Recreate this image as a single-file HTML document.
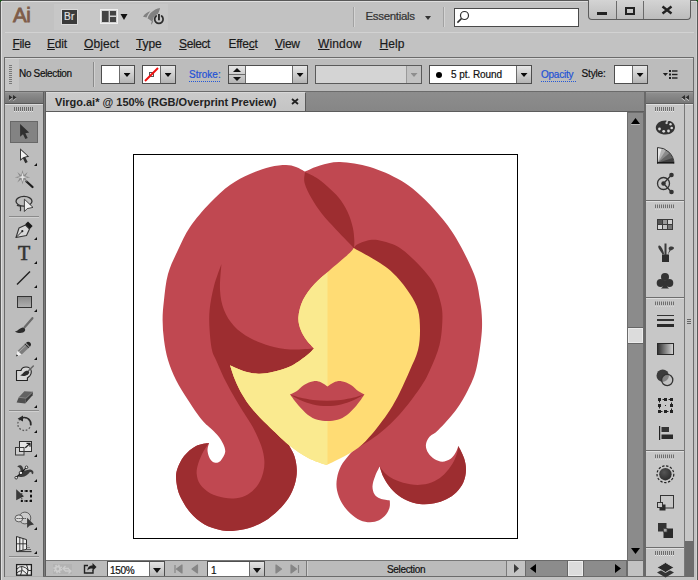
<!DOCTYPE html>
<html><head><meta charset="utf-8"><title>Virgo.ai</title>
<style>
*{box-sizing:border-box;margin:0;padding:0}
html,body{width:698px;height:580px;overflow:hidden;background:#c2c2c2;font-family:"Liberation Sans",sans-serif;color:#111}
#w{position:relative;width:698px;height:580px;overflow:hidden;background:#c2c2c2}
.a{position:absolute}
.t{position:absolute;white-space:nowrap;line-height:1;-webkit-text-stroke:.2px}
.menu{font-size:12px;top:38px;color:#1a1a1a}
.menu u{text-decoration:underline;text-underline-offset:1px}
.combo{position:absolute;border:1px solid #4d4d4d;background:#fff;top:65px;height:19px}
.btn{position:absolute;top:0;bottom:0;right:0;width:15px;border-left:1px solid #6b6b6b;background:linear-gradient(#e6e6e6,#b4b4b4)}
.btn:after{content:"";position:absolute;left:3.500px;top:7px;width:7px;height:4px;background:#0a0a0a;clip-path:polygon(0 0,100% 0,50% 100%)}
.link{color:#1f52d6;-webkit-text-stroke:.2px #1f52d6;font-size:10px;padding-bottom:2px;background:repeating-linear-gradient(90deg,#2257d8 0 1px,transparent 1px 2px) 0 100%/100% 1px no-repeat}
.grip{position:absolute;height:5px;width:20px;background:repeating-linear-gradient(90deg,#6a6a6a 0 1px,transparent 1px 2px) 0 0/20px 4px no-repeat,repeating-linear-gradient(90deg,#e2e2e2 0 1px,transparent 1px 2px) 0 4px/20px 1px no-repeat}
.sep{position:absolute;height:1px;background:#7d7d7d;box-shadow:0 1px 0 #d2d2d2}
.btn.dis:after{background:#8e8e8e}
</style></head><body><div id="w">
<!-- window frame -->
<div class="a" style="left:0;top:0;width:698px;height:584px;background:#c2c2c2;border:1px solid #585858"></div>
<div class="a" style="left:1px;top:1px;width:696px;height:582px;border:1px solid #dedede;border-right-color:#cfcfcf;border-bottom-color:#cfcfcf"></div>
<div class="a" style="left:0;top:0;width:2px;height:1px;background:#1d5a1d"></div><div class="a" style="left:0;top:1px;width:1px;height:1px;background:#1d5a1d"></div>
<div class="a" style="left:696px;top:0;width:2px;height:1px;background:#1d5a1d"></div><div class="a" style="left:697px;top:1px;width:1px;height:1px;background:#1d5a1d"></div>
<div class="a" style="left:4px;top:57px;width:690px;height:520px;background:#bdbdbd;border:1px solid #6b6b6b"></div>
<!-- app bar -->
<div class="a" style="left:54px;top:4px;width:114px;height:26px;background:#c7c7c7"></div>
<div class="t" style="left:13px;top:5px;font-size:20.5px;color:#7f5d49;-webkit-text-stroke:.8px #7f5d49;letter-spacing:-.4px">Ai</div>
<div class="a" style="left:61px;top:9px;width:17px;height:16px;background:#3b3b3b;border:1px solid #dadada"></div>
<div class="t" style="left:64px;top:12px;font-size:10px;color:#e0e0e0;letter-spacing:.3px">Br</div>
<svg class="a" style="left:96px;top:4px" width="76" height="26" viewBox="96 4 76 26"><rect x="100.500" y="9.500" width="17" height="14" fill="#cfcfcf" stroke="#efefef"/><rect x="102" y="11" width="6.600" height="11" fill="#434343"/><rect x="110" y="11" width="6" height="4.500" fill="#434343"/><rect x="110" y="17" width="6" height="5" fill="#434343"/><path d="M120.500 14h7l-3.500 6z" fill="#111"/>
<path d="M147.600 18.500C149 13 154 9 160 7.900C159.500 12.500 155.500 18 151.500 21.500C150.500 20 149 19 147.600 18.500Z" fill="#818181"/><path d="M143 16.700C144.500 14 147.500 12 150.400 11.300C149 13 147.500 15 146.500 17.500Z" fill="#818181"/><path d="M151 24.700C151 22.500 152 21 153.300 19.800C153.300 21.500 153 23 151 24.700Z" fill="#818181"/>
<circle cx="158.900" cy="19.500" r="5.600" fill="#c7c7c7"/><path d="M156.200 16A4.200 4.200 0 1 0 161.600 16" fill="none" stroke="#2e2e2e" stroke-width="1.700" stroke-linecap="round"/><rect x="158" y="14" width="1.900" height="6.300" fill="#2e2e2e"/></svg>
<div class="a" style="left:353px;top:7px;width:1px;height:20px;background:#a2a2a2;box-shadow:1px 0 0 #d4d4d4"></div>
<div class="t" style="left:365.5px;top:11px;font-size:11.5px;letter-spacing:-.32px;color:#333">Essentials</div>
<div class="a" style="left:425px;top:16px;border:3px solid transparent;border-top:4px solid #333;border-bottom:0"></div>
<div class="a" style="left:443px;top:7px;width:1px;height:20px;background:#a2a2a2;box-shadow:1px 0 0 #d4d4d4"></div>
<div class="a" style="left:454px;top:8px;width:125px;height:19px;background:#fff;border:1px solid #4a4a4a"></div>
<svg class="a" style="left:456px;top:9px" width="16" height="16" viewBox="456 9 16 16"><circle cx="464.500" cy="15.500" r="4" fill="none" stroke="#2e2e2e" stroke-width="1.200"/><path d="M461.400 18.600L457.400 22.600" stroke="#2e2e2e" stroke-width="1.500"/></svg>
<!-- window buttons -->
<div class="a" style="left:588px;top:0;width:103px;height:20px;border:1px solid #5c5c5c;border-top:0;border-radius:0 0 4px 4px;background:linear-gradient(#d4d4d4,#bcbcbc)"></div>
<div class="a" style="left:616px;top:1px;width:1px;height:18px;background:#6a6a6a"></div>
<div class="a" style="left:643px;top:1px;width:1px;height:18px;background:#6a6a6a"></div>
<div class="a" style="left:597px;top:12px;width:10px;height:3px;background:#222"></div>
<div class="a" style="left:625px;top:7px;width:10px;height:8px;border:2px solid #222"></div>
<svg class="a" style="left:661px;top:5px" width="12" height="10"><path d="M1.5 1.5L10.5 8.5M10.5 1.5L1.5 8.5" stroke="#222" stroke-width="2.4"/></svg>
<!-- menu -->
<div class="a" style="left:5px;top:32px;width:689px;height:1px;background:#d2d2d2"></div>
<div class="t menu" style="left:12.5px;letter-spacing:-.34px"><u>F</u>ile</div>
<div class="t menu" style="left:47px;letter-spacing:-.22px"><u>E</u>dit</div>
<div class="t menu" style="left:84px;letter-spacing:.08px"><u>O</u>bject</div>
<div class="t menu" style="left:136px;letter-spacing:-.13px"><u>T</u>ype</div>
<div class="t menu" style="left:179px;letter-spacing:-.39px"><u>S</u>elect</div>
<div class="t menu" style="left:228.4px;letter-spacing:-.2px">Effe<u>c</u>t</div>
<div class="t menu" style="left:275px;letter-spacing:-.27px"><u>V</u>iew</div>
<div class="t menu" style="left:318px;letter-spacing:.15px"><u>W</u>indow</div>
<div class="t menu" style="left:379.5px;letter-spacing:.1px"><u>H</u>elp</div>
<!-- control bar -->
<div class="a" style="left:5px;top:57px;width:688px;height:35px;border:1px solid #6b6b6b;border-left:0;border-right:0;background:#bcbcbc;box-shadow:inset 0 1px 0 #d8d8d8"></div>

<div class="a" style="left:5px;top:59px;width:14px;height:32px;background:#c6c6c6"></div>
<div class="a" style="left:9px;top:65px;width:3px;height:20px;background:repeating-linear-gradient(180deg,#787878 0 1px,transparent 1px 2px)"></div>
<div class="t" style="left:19px;top:69px;font-size:10px;letter-spacing:-.33px;color:#111">No Selection</div>
<div class="a" style="left:93px;top:62px;width:1px;height:25px;background:#8a8a8a;box-shadow:1px 0 0 #d0d0d0"></div>
<div class="combo" style="left:101px;width:34px"><div class="btn"></div></div>
<div class="combo" style="left:142px;width:34px"><svg class="a" style="left:0;top:0" width="17" height="17"><rect x="6.5" y="6.5" width="4" height="4" fill="none" stroke="#555"/><path d="M2 15L15 2" stroke="#e11" stroke-width="2"/></svg><div class="btn"></div></div>
<div class="t link" style="left:189px;top:70px">Stroke:</div>
<div class="combo" style="left:228px;width:80px"><div class="a" style="left:0;top:0;width:17px;height:17px;border-right:1px solid #6b6b6b;background:linear-gradient(#e6e6e6,#b4b4b4)"><div class="a" style="left:0;top:8px;width:16px;height:1px;background:#6b6b6b"></div><div class="a" style="left:4px;top:2px;border:4px solid transparent;border-bottom:4px solid #111;border-top:0"></div><div class="a" style="left:4px;top:11px;border:4px solid transparent;border-top:4px solid #111;border-bottom:0"></div></div><div class="btn"></div></div>
<div class="combo" style="left:315px;width:107px;background:#d4d4d4;border-color:#5a5a5a"><div class="btn dis" style="background:#c2c2c2;border-left-color:#9a9a9a"></div></div>
<div class="combo" style="left:429px;width:103px"><div class="a" style="left:6px;top:6px;width:6px;height:6px;border-radius:3px;background:#000"></div><div class="t" style="left:21px;top:4px;font-size:10px;letter-spacing:-.06px">5 pt. Round</div><div class="btn"></div></div>
<div class="t link" style="left:541px;top:70px;font-size:10px;letter-spacing:-.24px;padding-right:3.500px">Opacity</div>
<div class="t" style="left:581.5px;top:69px;font-size:10px;letter-spacing:-.15px">Style:</div>
<div class="combo" style="left:614px;width:34px"><div class="btn"></div></div>
<svg class="a" style="left:662px;top:68px" width="18" height="13" viewBox="662 68 18 13"><path d="M662.800 73h5.200l-2.600 3z" fill="#1e1e1e"/><g fill="#1e1e1e"><rect x="669" y="70" width="2" height="2"/><rect x="669" y="73.500" width="2" height="2"/><rect x="669" y="77" width="2" height="2"/><rect x="672" y="70.300" width="5.500" height="1.400"/><rect x="672" y="73.800" width="5.500" height="1.400"/><rect x="672" y="77.300" width="5.500" height="1.400"/></g></svg>
<!-- toolbar left -->
<div class="a" style="left:5px;top:92px;width:38px;height:484px;background:#bdbdbd"></div>
<div class="a" style="left:5px;top:92px;width:38px;height:11px;background:linear-gradient(#8e8e8e,#767676);border-top:1px solid #999"></div>
<div class="a" style="left:5px;top:104px;width:38px;height:1px;background:#dcdcdc"></div>
<div class="a" style="left:5px;top:103px;width:38px;height:1px;background:#575757"></div>
<div class="a" style="left:43px;top:92px;width:3px;height:484px;background:#7c7c7c;border-left:1px solid #5e5e5e;border-right:1px solid #5e5e5e"></div>
<div class="a" style="left:5px;top:576px;width:38px;height:1px;background:#adadad"></div>
<svg class="a" style="left:9px;top:95px" width="9" height="7"><path d="M0 1l3.500 2.500l-3.500 2.500zM4 1l3.500 2.500l-3.500 2.500z" fill="#bdbdbd"/><path d="M0 0l3.500 2.500l-3.500 2.500zM4 0l3.500 2.500l-3.500 2.500z" fill="#2e2e2e"/></svg>
<div class="grip" style="left:14px;top:107px"></div>
<svg class="a" style="left:0;top:0" width="48" height="580" viewBox="0 0 48 580">
<defs><linearGradient id="gr1" x1="0" y1="0" x2="0" y2="1"><stop offset="0" stop-color="#8a8a8a"/><stop offset="1" stop-color="#b0b0b0"/></linearGradient>
<path id="tri" d="M3 0v3h-3z" fill="#111"/></defs>
<!-- selection -->
<rect x="10.500" y="121.500" width="27" height="21" fill="#838383" stroke="#686868"/>
<path d="M20.100 124V136.700L23 134.200L25.300 139L27.700 137.900L25.400 133.200L29.200 132.500Z" fill="#303030"/>
<!-- direct selection -->
<path d="M20.100 148.200V160.900L23 158.400L25.300 163.200L27.700 162.100L25.400 157.400L29.200 156.700Z" fill="#303030"/>
<path d="M21 150.300V159L23.200 157.200L27.300 156Z" fill="#f2f2f2"/>
<use href="#tri" x="34" y="163"/>
<!-- magic wand -->
<path d="M26.500 181.500L32.500 187" stroke="#1e1e1e" stroke-width="2.300" stroke-linecap="round"/>
<path d="M22.500 170l1.300 5.200l3.900-3.200l-2.300 4.200l4.800 1l-4.800 1l2.300 4.200l-3.900-3.200l-1.300 5.200l-1.300-5.200l-3.900 3.200l2.300-4.200l-4.800-1l4.800-1l-2.300-4.200l3.900 3.200z" fill="#8a8a8a"/>
<path d="M22.500 172.500l.9 3.800l3.800.9l-3.800.9l-.9 3.800l-.9-3.800l-3.800-.9l3.800-.9z" fill="#e4e4e4"/>
<!-- lasso -->
<ellipse cx="24" cy="201.300" rx="8" ry="4.900" fill="none" stroke="#333" stroke-width="1.300"/>
<path d="M17 205c1.500 1.500 4 .5 3.500 2c-.5 1.500 1 2.500-.5 4" fill="none" stroke="#333" stroke-width="1.200"/>
<path d="M24.400 199.200V211.500L27.200 208.600L33 207.400Z" fill="#f0f0f0" stroke="#333" stroke-width=".9" stroke-linejoin="round"/>
<!-- separator -->
<rect x="9" y="216" width="30" height="1" fill="#8a8a8a"/><rect x="9" y="217" width="30" height="1" fill="#d0d0d0"/>
<!-- pen -->
<path d="M16 237.5l3-9.5l6.5-3l4 4l-3 6.5z" fill="#d8d8d8" stroke="#333" stroke-width="1.1" stroke-linejoin="round"/>
<path d="M16 237.5l6-6" stroke="#333" stroke-width="1"/><circle cx="22.3" cy="231.2" r="1.1" fill="#222"/>
<path d="M25.2 224.3l2.8-2.8l4.6 4.6l-2.8 2.8z" fill="#1a1a1a"/>
<use href="#tri" x="34" y="237"/>
<!-- T -->
<text x="24.200" y="260.300" font-family="Liberation Serif,serif" font-size="20" text-anchor="middle" fill="#333" stroke="#333" stroke-width=".55">T</text>
<use href="#tri" x="34" y="261"/>
<!-- line -->
<path d="M17 284.5L30 271.5" stroke="#222" stroke-width="1.4"/>
<use href="#tri" x="34" y="285"/>
<!-- rect -->
<rect x="17.5" y="296.5" width="14" height="11" fill="url(#gr1)" stroke="#333"/>
<use href="#tri" x="34" y="309"/>
<!-- brush -->
<path d="M32.400 318.200L24.600 327.300" stroke="#6a6a6a" stroke-width="2.200" stroke-linecap="round"/>
<path d="M14.900 331.400c3.500-.5 4-3.200 7.600-4c2 0 3.300 1.700 2.500 3.400c-1.500 2.600-6.600 3-10.100 .6z" fill="#2c2c2c"/>
<!-- pencil -->
<path d="M15.900 356.400l1.800-5.700l4 3.900z" fill="#f0f0f0"/><path d="M15.900 356.400l.7-2.100l1.500 1.400z" fill="#222"/>
<path d="M17.700 350.700l8.400-8l3.900 4l-8.300 7.900z" fill="#7c7c7c"/><path d="M19 352l8.400-8" stroke="#a8a8a8" stroke-width="1"/>
<path d="M26.100 342.700c1.300-1.400 2.900-1.300 4 -.2c1.100 1.100 1.300 2.700-.1 4.200z" fill="#262626"/>
<path d="M24.800 343.900l3.900 4" stroke="#262626" stroke-width="1"/>
<use href="#tri" x="34" y="357"/>
<!-- blob brush -->
<path d="M16.500 370.500H21C21.500 368.500 23.500 367 26 367C29 367 31.300 369 31.300 371.800C31.300 373.500 30.800 374.800 29.800 375.800L27.400 378V380.500H16.500Z" fill="#d6d6d6" stroke="#222" stroke-width="1.100" stroke-linejoin="round"/>
<path d="M33.300 366L28.500 370.800" stroke="#666" stroke-width="1.500" stroke-linecap="round"/>
<path d="M20 375.200c2.500-.3 3.300-3.300 6.300-4.400c1.700-.5 3 .3 2.900 1.700c-.3 2.500-5.200 4.700-9.200 2.700z" fill="#2c2c2c"/>
<!-- eraser -->
<path d="M24.400 391.300L33 391.700L26.100 398.200L18.800 397.300Z" fill="#626262"/>
<path d="M18.800 397.300L26.100 398.200L25.200 403.500L16.600 402.500Z" fill="#505050"/>
<path d="M26.100 398.200L33 391.700L32.600 395.300L25.200 403.500Z" fill="#3c3c3c"/>
<path d="M18.800 397.300L26.100 398.200L33 391.700" fill="none" stroke="#8c8c8c" stroke-width=".7"/>
<use href="#tri" x="34" y="405"/>
<!-- separator -->
<rect x="9" y="410" width="30" height="1" fill="#8a8a8a"/><rect x="9" y="411" width="30" height="1" fill="#d0d0d0"/>
<!-- rotate -->
<circle cx="24.300" cy="424" r="6.500" fill="none" stroke="#5a5a5a" stroke-width="1.300" stroke-dasharray="1.700 1.700"/>
<path d="M22.300 417.800A6.500 6.500 0 0 1 30.700 425.200" fill="none" stroke="#2a2a2a" stroke-width="1.600"/>
<path d="M17.600 418.800L23 415.600V421.400Z" fill="#2a2a2a"/>
<use href="#tri" x="34" y="430"/>
<!-- scale -->
<rect x="15.500" y="447.500" width="8.500" height="7.500" fill="#cdcdcd"/>
<rect x="19.500" y="441.500" width="12" height="10" fill="#e4e4e4" stroke="#2e2e2e"/>
<rect x="15.500" y="447.500" width="8.500" height="7.500" fill="none" stroke="#3a3a3a"/>
<path d="M25.300 447.800l4.500-4.200M26.500 443.300h3.500v3.500" fill="none" stroke="#1e1e1e" stroke-width="1.200"/>
<use href="#tri" x="34" y="454"/>
<!-- warp -->
<path d="M17.300 467.200c.3-1.700 2.300-2.600 3.900-1.600c1.700 1.100 2 3 2.400 4.800c2.300.6 4.200-1.300 6.800-.9c2 .3 3.400 1.700 3 3.500c-.2 1-1 1.400-1.700 1c.5-1.300-.5-2.300-1.800-2c-1.700 2.600-4.300 4.700-8.200 4.900c-1.800 0-3.500-.3-4.600-1c2.300-.8 3.700-2.600 3.600-4.800c-.1-1.800-.7-3.300-2-3.900c-.6-.2-1.100 0-1.400 0z" fill="#3c3c3c"/>
<path d="M16.200 477.700L26.500 467.300" stroke="#111" stroke-width="1.100"/><circle cx="16.200" cy="477.700" r="1.300" fill="#eee" stroke="#111" stroke-width=".8"/><circle cx="26.500" cy="467.300" r="1.300" fill="#eee" stroke="#111" stroke-width=".8"/><circle cx="20.900" cy="472.900" r="1.700" fill="#f4f4f4" stroke="#111" stroke-width=".8"/>
<use href="#tri" x="34" y="479"/>
<!-- free transform -->
<path d="M16.200 489.300V500.200L24 496.200Z" fill="#3a3a3a"/>
<rect x="21.800" y="491" width="9.200" height="10" fill="none" stroke="#222" stroke-width="1" stroke-dasharray="1.200 1.300"/>
<g fill="#111"><rect x="20.800" y="490" width="2" height="2"/><rect x="25.400" y="490" width="2" height="2"/><rect x="30" y="490" width="2" height="2"/><rect x="30" y="495" width="2" height="2"/><rect x="30" y="500" width="2" height="2"/><rect x="25.400" y="500" width="2" height="2"/><rect x="20.800" y="500" width="2" height="2"/></g>
<!-- shape builder -->
<circle cx="24.900" cy="518" r="5.900" fill="#cbcbcb" stroke="#5e5e5e" stroke-width="1"/>
<ellipse cx="18.900" cy="518.400" rx="3.900" ry="3.500" fill="#dcdcdc" stroke="#5e5e5e" stroke-width="1"/>
<path d="M16.600 518.500h10" stroke="#1a1a1a" stroke-width="1.100" stroke-dasharray="1 1"/>
<path d="M27.100 517.700V527.900L29.800 525.600L34 524.500Z" fill="#3a3a3a"/>
<use href="#tri" x="34" y="527"/>
<!-- perspective grid -->
<path d="M16.500 536.500L26.500 539.600V549.400L16.500 551.500Z" fill="#ececec" stroke="#2a2a2a" stroke-width="1"/>
<path d="M19.800 537.500V551M23 538.500V550.200M16.500 543.800H26.500" fill="none" stroke="#2a2a2a" stroke-width=".9"/>
<path d="M16.500 551.600H31.500" stroke="#333" stroke-width="1"/><path d="M26.500 549.500H31" stroke="#555" stroke-width=".9"/><path d="M26.500 547.500H30" stroke="#777" stroke-width=".8"/><path d="M26.500 545.600H29" stroke="#999" stroke-width=".7"/>
<use href="#tri" x="34" y="551"/>
<!-- separator -->
<rect x="9" y="556" width="30" height="1" fill="#8a8a8a"/><rect x="9" y="557" width="30" height="1" fill="#d0d0d0"/>
<!-- mesh -->
<rect x="16.600" y="564.600" width="14.800" height="10.600" fill="#ececec" stroke="#1e1e1e" stroke-width="1.300"/>
<path d="M16.500 569.500Q19.500 566 22.500 566.500T28.600 570.500H31.500M16.500 573.500Q19 570.500 21.500 570.800M26.500 564.500Q29.500 569.500 27 575.300M21.800 566.500Q22.500 571 20.500 575.300M22.200 570Q25 572 27.300 574.500" fill="none" stroke="#1e1e1e" stroke-width=".9"/>
</svg>

<!-- doc area -->
<div class="a" style="left:46px;top:92px;width:598px;height:19px;background:linear-gradient(#8d8d8d,#868686)"></div>
<div class="a" style="left:46px;top:92px;width:260px;height:19px;background:linear-gradient(#cbcbcb,#c4c4c4);border-right:1px solid #5a5a5a;border-top:1px solid #d8d8d8"></div>
<div class="a" style="left:46px;top:111px;width:598px;height:1px;background:#5c5c5c"></div>
<div class="t" style="left:55px;top:97px;font-size:11px;font-weight:bold;color:#222;-webkit-text-stroke:0">Virgo.ai* @ 150% (RGB/Overprint Preview)</div>
<svg class="a" style="left:291px;top:98px" width="8" height="7"><path d="M1 1l6 5M7 1l-6 5" stroke="#222" stroke-width="1.800"/></svg>
<div class="a" style="left:46px;top:112px;width:581px;height:448px;background:#fff"></div>
<svg id="art" width="698" height="580" viewBox="0 0 698 580" style="position:absolute;left:0;top:0">
<defs><clipPath id="fc"><path d="M353.6 248.0 C358.0 250.5 372.9 258.3 380.0 263.0 C387.1 267.7 391.0 270.8 396.0 276.0 C401.0 281.2 406.3 288.3 410.0 294.0 C413.7 299.7 416.3 304.0 418.0 310.0 C419.7 316.0 420.0 323.3 420.0 330.0 C420.0 336.7 419.7 343.3 418.0 350.0 C416.3 356.7 413.0 363.0 410.0 370.0 C407.0 377.0 403.3 385.3 400.0 392.0 C396.7 398.7 393.3 404.7 390.0 410.0 C386.7 415.3 383.1 419.9 380.0 424.0 C376.9 428.1 375.2 430.6 371.6 434.5 C368.1 438.4 364.0 443.4 358.7 447.4 C353.4 451.4 345.4 455.6 340.0 458.5 C334.6 461.4 328.8 463.9 326.5 465.0 C323.4 463.8 314.5 461.2 308.2 457.9 C301.9 454.6 295.6 450.5 288.8 445.0 C282.0 439.5 273.5 430.9 267.3 424.8 C261.1 418.7 255.8 413.1 251.7 408.2 C247.6 403.3 245.5 400.1 242.7 395.3 C239.9 390.6 237.1 384.7 235.0 379.7 C232.9 374.7 230.8 367.7 230.0 365.3 C232.1 366.2 238.0 369.3 242.7 370.7 C247.4 372.1 253.2 373.5 258.2 373.7 C263.1 373.9 267.1 373.2 272.4 372.0 C277.7 370.8 284.4 369.3 290.0 366.6 C295.6 363.9 302.0 359.0 306.0 356.0 C310.0 353.0 312.7 349.7 314.0 348.4 C312.8 347.0 308.7 343.1 306.5 340.0 C304.3 336.9 302.2 333.8 300.8 330.0 C299.4 326.2 298.0 322.0 298.4 317.0 C298.8 312.0 300.3 305.5 303.0 300.0 C305.7 294.5 310.0 289.0 314.5 284.0 C319.0 279.0 324.1 275.2 330.0 270.0 C335.9 264.8 345.7 256.7 349.6 253.0 C353.5 249.3 352.9 248.8 353.6 248.0 Z"/></clipPath></defs>
<rect x="133.5" y="154.5" width="384" height="384" fill="none" stroke="#000" stroke-width="1"/>
<path fill="#c04851" d="M305.0 171.6 C307.5 170.6 314.2 167.1 320.0 165.5 C325.8 163.9 331.7 161.8 340.0 162.0 C348.3 162.2 360.0 164.0 370.0 167.0 C380.0 170.0 391.7 175.3 400.0 180.0 C408.3 184.7 413.3 189.0 420.0 195.0 C426.7 201.0 434.0 208.8 440.0 216.0 C446.0 223.2 450.3 228.3 456.0 238.0 C461.7 247.7 470.0 263.7 474.0 274.0 C478.0 284.3 478.7 292.3 480.0 300.0 C481.3 307.7 481.8 313.3 482.0 320.0 C482.2 326.7 482.0 331.7 481.0 340.0 C480.0 348.3 478.2 361.7 476.0 370.0 C473.8 378.3 471.3 383.3 468.0 390.0 C464.7 396.7 460.9 403.3 456.0 410.0 C451.1 416.7 442.8 425.5 438.3 430.0 C433.9 434.5 431.4 434.5 429.3 437.0 C427.2 439.5 426.1 442.4 425.9 445.1 C425.7 447.8 426.9 450.8 428.3 453.1 C429.7 455.4 432.0 457.7 434.3 459.1 C436.6 460.5 439.6 461.7 442.3 461.7 C445.0 461.7 448.1 460.5 450.3 459.1 C452.5 457.7 454.0 455.3 455.4 453.1 C456.8 450.9 457.9 447.3 458.4 446.1 C459.3 448.1 462.7 454.1 464.0 458.1 C465.3 462.1 466.1 466.1 466.0 470.1 C465.9 474.1 465.0 478.5 463.4 482.2 C461.8 485.9 459.2 489.4 456.4 492.2 C453.5 495.0 450.0 497.4 446.3 499.2 C442.6 501.0 438.3 502.4 434.3 503.2 C430.3 504.0 426.3 504.4 422.3 504.2 C418.3 504.0 414.2 503.3 410.2 501.8 C406.2 500.3 401.7 497.8 398.2 495.2 C394.7 492.6 391.7 489.4 389.2 486.2 C386.7 483.0 384.7 479.5 383.1 476.2 C381.5 472.9 380.3 468.1 379.7 466.5 C378.9 468.1 376.3 472.9 375.1 476.2 C373.9 479.5 372.6 483.2 372.5 486.2 C372.4 489.2 373.2 492.1 374.5 494.2 C375.8 496.3 377.6 497.5 380.1 498.6 C382.7 499.7 388.2 500.3 389.8 500.6 C389.8 501.7 390.2 504.9 389.6 507.2 C389.0 509.5 387.9 512.1 386.2 514.3 C384.4 516.5 381.8 519.0 379.1 520.3 C376.4 521.6 373.3 522.3 370.1 522.3 C366.9 522.3 363.4 521.8 360.1 520.3 C356.8 518.8 353.1 516.1 350.1 513.3 C347.1 510.4 344.2 507.0 342.0 503.2 C339.8 499.4 337.8 494.4 337.0 490.2 C336.2 486.0 336.3 482.2 337.0 478.2 C337.7 474.2 339.0 470.0 341.0 466.1 C343.0 462.2 346.6 458.1 349.1 455.1 C351.6 452.1 354.9 449.3 356.1 448.1 C351.8 446.8 341.2 440.5 330.0 440.0 C318.8 439.5 295.7 444.2 288.8 445.0 C289.7 446.9 293.1 451.9 294.4 456.1 C295.7 460.3 296.7 465.4 296.8 470.1 C296.9 474.8 296.2 479.5 294.8 484.2 C293.4 488.9 291.1 493.9 288.4 498.2 C285.6 502.5 282.3 506.4 278.3 510.2 C274.3 514.0 269.3 518.3 264.3 521.3 C259.3 524.3 253.5 526.7 248.2 528.3 C242.8 529.9 236.9 530.6 232.2 530.9 C227.5 531.2 224.9 531.0 220.2 529.9 C215.5 528.8 209.1 527.2 204.1 524.3 C199.1 521.3 194.1 516.9 190.1 512.2 C186.1 507.5 182.4 501.2 180.1 496.2 C177.8 491.2 176.9 486.5 176.4 482.1 C175.9 477.8 175.7 474.4 177.0 470.1 C178.3 465.8 180.9 460.1 184.1 456.1 C187.3 452.1 191.9 448.2 196.1 446.0 C200.3 443.8 206.9 443.5 209.1 443.0 C208.8 444.2 207.5 447.6 207.5 450.0 C207.5 452.4 208.4 455.3 209.1 457.1 C209.8 458.9 210.8 460.1 211.8 461.0 C212.8 461.9 214.1 462.6 215.2 462.8 C216.3 463.0 217.6 462.6 218.6 462.2 C219.6 461.8 220.1 461.8 221.2 460.1 C222.3 458.4 224.9 454.8 225.2 452.1 C225.5 449.4 224.4 446.7 223.2 444.0 C222.0 441.3 220.0 438.3 218.2 436.0 C216.4 433.7 215.2 432.7 212.5 430.0 C209.8 427.3 206.1 425.0 202.0 420.0 C197.9 415.0 192.3 406.7 188.0 400.0 C183.7 393.3 179.3 386.7 176.0 380.0 C172.7 373.3 170.0 366.7 168.0 360.0 C166.0 353.3 164.9 346.7 164.0 340.0 C163.1 333.3 162.6 326.7 162.6 320.0 C162.6 313.3 163.1 307.7 164.0 300.0 C164.9 292.3 165.7 282.3 168.0 274.0 C170.3 265.7 174.3 257.8 178.0 250.0 C181.7 242.2 184.7 234.8 190.0 227.0 C195.3 219.2 203.3 210.0 210.0 203.0 C216.7 196.0 223.3 189.8 230.0 185.0 C236.7 180.2 243.3 177.0 250.0 174.0 C256.7 171.0 264.0 168.5 270.0 167.0 C276.0 165.5 281.7 165.0 286.0 165.0 C290.3 165.0 292.8 165.9 296.0 167.0 C299.2 168.1 303.5 170.8 305.0 171.6 Z"/>
<path fill="#9d2d30" d="M221.4 264.0 C220.2 267.7 216.0 278.3 214.0 286.0 C212.0 293.7 210.3 302.7 209.6 310.0 C208.9 317.3 209.2 323.3 209.6 330.0 C210.0 336.7 210.9 345.0 212.0 350.0 C213.1 355.0 213.8 355.0 216.0 360.0 C218.2 365.0 221.7 373.3 225.0 380.0 C228.3 386.7 232.1 393.3 236.0 400.0 C239.9 406.7 245.4 415.0 248.5 420.0 C251.6 425.0 252.2 425.7 254.3 430.0 C256.4 434.3 259.6 441.0 261.3 446.0 C263.0 451.0 264.0 455.8 264.3 460.1 C264.6 464.5 264.3 468.1 263.3 472.1 C262.3 476.1 260.8 480.5 258.3 484.2 C255.8 487.9 251.9 491.9 248.2 494.2 C244.5 496.5 240.2 497.6 236.2 498.2 C232.2 498.8 228.5 498.6 224.2 497.8 C219.8 497.0 214.1 495.5 210.1 493.2 C206.1 490.9 202.3 487.4 200.1 484.2 C197.9 481.0 197.0 477.5 196.7 474.1 C196.4 470.8 197.0 467.8 198.1 464.1 C199.2 460.4 201.3 455.6 203.1 452.1 C204.9 448.6 208.1 444.5 209.1 443.0 C206.9 443.5 200.3 443.8 196.1 446.0 C191.9 448.2 187.3 452.1 184.1 456.1 C180.9 460.1 178.3 465.8 177.0 470.1 C175.7 474.4 175.9 477.8 176.4 482.1 C176.9 486.5 177.8 491.2 180.1 496.2 C182.4 501.2 186.1 507.5 190.1 512.2 C194.1 516.9 199.1 521.3 204.1 524.3 C209.1 527.2 215.5 528.8 220.2 529.9 C224.9 531.0 227.5 531.2 232.2 530.9 C236.9 530.6 242.8 529.9 248.2 528.3 C253.5 526.7 259.3 524.3 264.3 521.3 C269.3 518.3 274.3 514.0 278.3 510.2 C282.3 506.4 285.6 502.5 288.4 498.2 C291.1 493.9 293.4 488.9 294.8 484.2 C296.2 479.5 296.9 474.8 296.8 470.1 C296.7 465.4 295.7 460.3 294.4 456.1 C293.1 451.9 289.7 446.9 288.8 445.0 C290.7 442.5 296.5 444.2 300.0 430.0 C303.5 415.8 307.7 373.6 310.0 360.0 C312.3 346.4 313.3 350.3 314.0 348.4 C310.0 348.6 297.3 349.8 290.0 349.4 C282.7 349.0 276.7 347.9 270.0 346.0 C263.3 344.1 256.0 341.3 250.0 338.0 C244.0 334.7 238.3 330.7 234.0 326.0 C229.7 321.3 226.3 316.0 224.0 310.0 C221.7 304.0 220.4 297.7 220.0 290.0 C219.6 282.3 221.2 268.3 221.4 264.0 Z"/>
<path fill="#9d2d30" d="M353.6 248.0 C354.3 247.3 355.3 245.3 358.0 244.0 C360.7 242.7 366.0 240.5 370.0 240.0 C374.0 239.5 377.0 239.7 382.0 241.0 C387.0 242.3 393.7 243.8 400.0 248.0 C406.3 252.2 414.3 260.0 420.0 266.0 C425.7 272.0 430.5 277.7 434.0 284.0 C437.5 290.3 439.6 298.0 441.0 304.0 C442.4 310.0 442.6 313.2 442.4 320.0 C442.1 326.8 441.6 336.7 439.5 345.0 C437.4 353.3 433.2 362.8 430.0 370.0 C426.8 377.2 425.0 380.7 420.0 388.0 C415.0 395.3 406.7 406.5 400.0 414.0 C393.3 421.5 386.9 427.4 380.0 433.0 C373.1 438.6 362.2 445.0 358.7 447.4 C355.6 444.5 343.1 454.6 340.0 430.0 C336.9 405.4 337.7 330.3 340.0 300.0 C342.3 269.7 351.3 256.7 353.6 248.0 Z"/>
<path fill="#9d2d30" d="M458.4 446.1 C459.3 448.1 462.7 454.1 464.0 458.1 C465.3 462.1 466.1 466.1 466.0 470.1 C465.9 474.1 465.0 478.5 463.4 482.2 C461.8 485.9 459.2 489.4 456.4 492.2 C453.5 495.0 450.0 497.4 446.3 499.2 C442.6 501.0 438.3 502.4 434.3 503.2 C430.3 504.0 426.3 504.4 422.3 504.2 C418.3 504.0 414.2 503.3 410.2 501.8 C406.2 500.3 401.7 497.8 398.2 495.2 C394.7 492.6 391.7 489.4 389.2 486.2 C386.7 483.0 384.7 479.5 383.1 476.2 C381.5 472.9 380.3 468.1 379.7 466.5 C380.8 467.8 383.4 471.9 386.2 474.2 C388.9 476.5 392.2 478.5 396.2 480.2 C400.2 481.9 405.8 483.5 410.2 484.2 C414.6 484.9 418.3 485.1 422.3 484.6 C426.3 484.1 430.6 482.9 434.3 481.2 C438.0 479.5 441.3 477.0 444.3 474.2 C447.3 471.4 450.2 467.5 452.3 464.1 C454.4 460.8 455.8 457.1 456.8 454.1 C457.8 451.1 458.1 447.4 458.4 446.1 Z"/>
<path fill="#9d2d30" d="M305.0 172.0 C306.8 172.9 312.4 175.2 316.0 177.5 C319.6 179.8 323.1 182.6 326.9 186.0 C330.7 189.4 335.6 193.8 339.0 198.1 C342.4 202.4 345.3 207.0 347.6 211.9 C349.9 216.8 351.7 222.7 352.8 227.4 C353.9 232.1 354.1 236.5 354.3 240.0 C354.5 243.5 354.1 246.8 354.0 248.2 C352.8 247.0 350.1 244.2 347.0 241.0 C343.9 237.8 339.7 233.7 335.5 229.1 C331.3 224.5 325.7 218.8 321.7 213.6 C317.7 208.4 314.2 203.2 311.4 198.1 C308.5 193.0 305.7 187.3 304.6 183.0 C303.5 178.7 304.9 173.8 305.0 172.0 Z"/>
<g clip-path="url(#fc)"><rect x="200" y="240" width="250" height="240" fill="#ffdc74"/><rect x="200" y="240" width="127.5" height="240" fill="#faea8f"/></g>
<path fill="#c04851" d="M290.0 394.5 C291.1 394.0 294.2 392.9 296.5 391.3 C298.8 389.7 301.1 386.6 304.0 384.9 C306.9 383.2 310.7 381.6 313.6 381.2 C316.5 380.8 318.9 381.5 321.2 382.4 C323.5 383.3 326.4 385.8 327.5 386.5 C328.6 385.8 331.5 383.3 333.8 382.4 C336.1 381.5 338.5 380.8 341.4 381.2 C344.3 381.6 348.1 383.2 351.0 384.9 C353.9 386.6 356.2 389.7 358.5 391.3 C360.8 392.9 363.5 394.0 364.5 394.5 C363.2 396.3 359.4 402.1 356.5 405.5 C353.6 408.9 350.1 412.6 347.0 415.0 C343.9 417.4 340.9 418.8 337.6 419.8 C334.4 420.8 330.9 421.0 327.5 421.0 C324.1 421.0 320.6 420.8 317.4 419.8 C314.1 418.8 311.1 417.4 308.0 415.0 C304.9 412.6 301.5 408.9 298.5 405.5 C295.5 402.1 291.4 396.3 290.0 394.5 Z"/>
<path fill="#9d2d30" d="M290.0 394.5 C291.7 395.0 296.2 396.6 300.0 397.5 C303.8 398.4 308.5 399.4 313.0 400.0 C317.5 400.6 322.3 400.8 327.0 400.8 C331.7 400.8 336.5 400.6 341.0 400.0 C345.5 399.4 350.2 398.4 354.0 397.5 C357.8 396.6 362.3 395.0 364.0 394.5 C362.3 395.4 357.8 398.3 354.0 400.0 C350.2 401.7 345.5 403.5 341.0 404.5 C336.5 405.5 331.7 406.0 327.0 406.0 C322.3 406.0 317.5 405.5 313.0 404.5 C308.5 403.5 303.8 401.7 300.0 400.0 C296.2 398.3 291.7 395.4 290.0 394.5 Z"/>
</svg>
<!-- v scrollbar -->
<div class="a" style="left:627px;top:112px;width:17px;height:448px;background:#8b8b8b;border:1px solid #6c6c6c;border-bottom:0"></div>
<div class="a" style="left:631px;top:118px;width:9px;height:6px;background:#000;clip-path:polygon(50% 0,100% 100%,0 100%)"></div>
<div class="a" style="left:631px;top:124px;width:9px;height:1px;background:#b4b4b4"></div>
<div class="a" style="left:631px;top:548px;width:9px;height:6px;background:#000;clip-path:polygon(0 0,100% 0,50% 100%)"></div>
<div class="a" style="left:628px;top:327px;width:15px;height:17px;background:#666"></div><div class="a" style="left:628px;top:328px;width:15px;height:15px;background:#dcdcdc;border:1px solid #ececec"></div>
<!-- status bar -->
<div class="a" style="left:46px;top:560px;width:598px;height:16px;background:#bbbbbb;border-top:1px solid #777"></div>
<div class="a" style="left:53px;top:564px;width:19px;height:10px;background:#b3b3b3"></div>
<svg class="a" style="left:53px;top:564px" width="19" height="10"><circle cx="4.800" cy="5" r="2.300" fill="none" stroke="#cdcdcd" stroke-width="1.800"/><circle cx="4.800" cy="5" r="3.700" fill="none" stroke="#cdcdcd" stroke-width="1.500" stroke-dasharray="1.450 1.450"/><path d="M10.500 4.500h5.500M12.500 2l-2.500 2.500l2.500 2.500M12 7h5.500M15.500 5l2.500 2l-2.500 2.500" fill="none" stroke="#cdcdcd" stroke-width="1.300"/></svg>
<svg class="a" style="left:83px;top:562px" width="14" height="12"><path d="M5 3.500h-3.500v7.500h8.500v-3" fill="none" stroke="#222" stroke-width="1.400"/><path d="M4.500 8.500c0-3.500 2-5 5-5v-2.500l4 4l-4 4v-2.500c-2.500 0-4 .5-5 2z" fill="#222"/></svg>
<div class="a" style="left:107px;top:561px;width:58px;height:15px;background:#fff;border:1px solid #4f4f4f;border-bottom:0"><div class="a" style="right:0;top:0;width:15px;height:14px;border-left:1px solid #6b6b6b;background:linear-gradient(#e4e4e4,#b8b8b8)"></div><div class="a" style="right:3px;top:6px;border:4px solid transparent;border-top:5px solid #111;border-bottom:0"></div></div>
<div class="t" style="left:110px;top:566px;font-size:10px;letter-spacing:-.35px">150%</div>
<svg class="a" style="left:174px;top:564px" width="26" height="10"><path d="M1 1v8M8 1v8l-5.500-4zM23.500 1v8l-5.500-4z" fill="#868686" stroke="#868686" stroke-width="1.200" stroke-linejoin="round"/></svg>
<div class="a" style="left:207px;top:561px;width:58px;height:15px;background:#fff;border:1px solid #4f4f4f;border-bottom:0"><div class="a" style="right:0;top:0;width:15px;height:14px;border-left:1px solid #6b6b6b;background:linear-gradient(#e4e4e4,#b8b8b8)"></div><div class="a" style="right:3px;top:6px;border:4px solid transparent;border-top:5px solid #111;border-bottom:0"></div></div>
<div class="t" style="left:211px;top:566px;font-size:10px">1</div>
<svg class="a" style="left:274px;top:564px" width="26" height="10"><path d="M2 1v8l5.500-4zM17 1v8l5.500-4zM24.500 1v8" fill="#868686" stroke="#868686" stroke-width="1.200" stroke-linejoin="round"/></svg>
<div class="a" style="left:306px;top:561px;width:1px;height:15px;background:#7a7a7a;box-shadow:1px 0 0 #cfcfcf"></div>
<div class="t" style="left:387px;top:565px;font-size:10px;letter-spacing:-.33px">Selection</div>
<div class="a" style="left:506px;top:561px;width:19px;height:15px;background:#c3c3c3;border-left:1px solid #7a7a7a"></div>
<div class="a" style="left:514px;top:564px;width:5px;height:9px;background:#3c3c3c;clip-path:polygon(0 0,100% 50%,0 100%)"></div>
<div class="a" style="left:525px;top:560px;width:102px;height:16px;background:#8c8c8c;border:1px solid #6a6a6a;border-bottom:0"></div>
<div class="a" style="left:530px;top:564px;width:6px;height:9px;background:#000;clip-path:polygon(100% 0,100% 100%,0 50%)"></div>
<div class="a" style="left:615px;top:564px;width:6px;height:9px;background:#000;clip-path:polygon(0 0,100% 50%,0 100%)"></div>
<div class="a" style="left:567px;top:561px;width:17px;height:15px;background:#666"></div><div class="a" style="left:568px;top:561px;width:15px;height:15px;background:#dcdcdc;border:1px solid #ececec"></div>
<div class="a" style="left:627px;top:560px;width:17px;height:16px;background:#c2c2c2;border:1px solid #6c6c6c;border-bottom:0"></div>

<!-- right dock -->
<div class="a" style="left:644px;top:92px;width:2px;height:484px;background:#696969"></div>
<div class="a" style="left:646px;top:92px;width:47px;height:12px;background:linear-gradient(#8e8e8e,#787878);border-bottom:1px solid #5e5e5e;border-top:1px solid #999"></div>
<svg class="a" style="left:681px;top:95px" width="9" height="7"><path d="M4 1l-3.500 2.500l3.500 2.500zM8 1l-3.500 2.500l3.500 2.500z" fill="#d0d0d0"/><path d="M4 0l-3.500 2.500l3.500 2.500zM8 0l-3.500 2.500l3.500 2.500z" fill="#2e2e2e"/></svg>
<div class="a" style="left:646px;top:104px;width:38px;height:472px;background:#c7c7c7;border-top:1px solid #dedede"></div>
<div class="a" style="left:684px;top:104px;width:1px;height:472px;background:#787878"></div>
<div class="a" style="left:685px;top:104px;width:8px;height:472px;background:#c7c7c7;border-top:1px solid #dedede"></div>
<div class="a" style="left:685px;top:541px;width:8px;height:35px;background:#6c6c6c"></div>
<svg class="a" style="left:644px;top:0" width="54" height="580" viewBox="644 0 54 580">
<defs>
<linearGradient id="gd" x1="0" y1="0" x2="1" y2="0"><stop offset="0" stop-color="#2e2e2e"/><stop offset="1" stop-color="#d8d8d8"/></linearGradient>
<radialGradient id="ap" cx=".4" cy=".35" r=".7"><stop offset="0" stop-color="#555"/><stop offset="1" stop-color="#2a2a2a"/></radialGradient>
<g id="dgrip"><path d="M0 0v4M2 0v4M4 0v4M6 0v4M8 0v4M10 0v4M12 0v4M14 0v4M16 0v4M18 0v4" stroke="#6e6e6e" stroke-width="1"/><path d="M0 4v1M2 4v1M4 4v1M6 4v1M8 4v1M10 4v1M12 4v1M14 4v1M16 4v1M18 4v1" stroke="#e6e6e6" stroke-width="1"/></g>
<g id="dsep"><rect x="646" y="0" width="38" height="1" fill="#6e6e6e"/><rect x="646" y="1" width="38" height="1" fill="#dedede"/></g>
</defs>
<use href="#dgrip" x="655.500" y="107"/>
<!-- color palette -->
<path d="M665.500 120.500c-5.500 0-9.700 3.200-9.700 7.200c0 4 4.500 6.800 9.700 6.800c5.800 0 9.500-3.500 9.500-7.500c0-2.500-2-5-5-6c-1.500-.4-2.500.3-2.300 1.500c.3 1.300-.7 2-1.700 1.500c-1.200-.6-.3-2.300.8-3c-.4-.4-.8-.5-1.300-.5z" fill="#333"/>
<circle cx="659.500" cy="129" r="1.400" fill="#d8d8d8"/><circle cx="663.700" cy="131.300" r="1.400" fill="#d8d8d8"/><circle cx="668.500" cy="131" r="1.400" fill="#d8d8d8"/><circle cx="671.700" cy="128" r="1.300" fill="#d8d8d8"/><circle cx="670.500" cy="124.300" r="1.200" fill="#d8d8d8"/>
<!-- color guide -->
<path d="M657.500 163v-15.500a16 16 0 0 1 16 15.500z" fill="#e6e6e6"/>
<path d="M657.500 163l4.300-15a16 16 0 0 1 11.700 15z" fill="#b4b4b4"/>
<path d="M657.500 163l8.500-13a16 16 0 0 1 7.500 13z" fill="#8a8a8a"/>
<path d="M657.500 163l12-10a16 16 0 0 1 4 10z" fill="#636363"/>
<path d="M657.500 163l15-5a16 16 0 0 1 1 5z" fill="#404040"/>
<path d="M657.500 163.500v-16a16.500 16.500 0 0 1 16.500 16" fill="none" stroke="#333" stroke-width="1"/>
<rect x="657" y="162" width="17" height="1.600" fill="#1a1a1a"/>
<!-- kuler -->
<circle cx="663.500" cy="183.500" r="6" fill="none" stroke="#333" stroke-width="1.300"/>
<circle cx="663.500" cy="183.500" r="2.200" fill="#333"/>
<path d="M671.500 175l-8 8.500l8 8.500" fill="none" stroke="#333" stroke-width="1.300"/>
<circle cx="671.500" cy="175" r="2.300" fill="#333"/><circle cx="671.500" cy="192" r="2.300" fill="#333"/>
<use href="#dsep" y="200"/>
<use href="#dgrip" x="655.500" y="204.500"/>
<!-- swatches -->
<rect x="657" y="219" width="16" height="11" fill="#3a3a3a"/>
<rect x="658" y="220" width="4" height="4" fill="#555"/><rect x="663" y="220" width="4" height="4" fill="#9a9a9a"/><rect x="668" y="220" width="4" height="4" fill="#cfcfcf"/>
<rect x="658" y="225" width="4" height="4" fill="#d6d6d6"/><rect x="663" y="225" width="4" height="4" fill="#c0c0c0"/><rect x="668" y="225" width="4" height="4" fill="#777"/>
<!-- brushes -->
<rect x="662" y="254.500" width="7" height="7.500" fill="#2c2c2c"/>
<path d="M664.500 255v-11.500h2v11.500z" fill="#3a3a3a"/>
<path d="M663 255l-4-6c-1.500-2.500-.5-4 .5-3.500c2 1 3.500 4 4.500 8z" fill="#3a3a3a"/>
<path d="M667.500 255l2-5c-2-2 0-4 2.500-3.500c2 .3 2.500 1.500 1.500 2.500c-1 1-2 1-3 1.500z" fill="#3a3a3a"/>
<!-- symbols club -->
<circle cx="665" cy="277" r="4" fill="#333"/><circle cx="660.700" cy="283" r="4" fill="#333"/><circle cx="669.300" cy="283" r="4" fill="#333"/>
<path d="M664 281h2c0 4 1 6 3 7.500h-8c2-1.500 3-3.500 3-7.500z" fill="#333"/>
<use href="#dsep" y="297"/>
<use href="#dgrip" x="655.500" y="301.500"/>
<!-- stroke -->
<rect x="657" y="315" width="17" height="1" fill="#333"/><rect x="657" y="319" width="17" height="2" fill="#333"/><rect x="657" y="324" width="17" height="3" fill="#2a2a2a"/>
<!-- gradient -->
<rect x="657.500" y="343.500" width="16" height="11" fill="url(#gd)" stroke="#2a2a2a"/>
<!-- transparency -->
<circle cx="662.700" cy="375.700" r="6.200" fill="#3c3c3c"/>
<circle cx="667.200" cy="380" r="5.600" fill="#bdbdbd" fill-opacity=".55" stroke="#333" stroke-width="1.300"/>
<!-- transform -->
<rect x="659.500" y="399.500" width="12" height="12" fill="none" stroke="#222" stroke-width="1" stroke-dasharray="1.500 1.500"/>
<g fill="#222"><rect x="658" y="398" width="3" height="3"/><rect x="664" y="398" width="3" height="3"/><rect x="670" y="398" width="3" height="3"/><rect x="658" y="404" width="3" height="3"/><rect x="670" y="404" width="3" height="3"/><rect x="658" y="410" width="3" height="3"/><rect x="664" y="410" width="3" height="3"/><rect x="670" y="410" width="3" height="3"/><rect x="665" y="405" width="1" height="1"/></g>
<!-- align -->
<rect x="659" y="426" width="1.200" height="14" fill="#222"/><rect x="661.500" y="427" width="7.500" height="5" fill="#333"/><rect x="661.500" y="434.500" width="11.500" height="4.500" fill="#2a2a2a"/>
<use href="#dsep" y="450"/>
<use href="#dgrip" x="655.500" y="454.500"/>
<!-- appearance -->
<circle cx="665.400" cy="474.200" r="8.400" fill="none" stroke="#222" stroke-width="1.200" stroke-dasharray="2.400 1.600"/>
<circle cx="665.400" cy="474.200" r="6.200" fill="url(#ap)"/>
<!-- graphic styles -->
<rect x="660.500" y="495.500" width="13" height="12.500" fill="none" stroke="#333" stroke-width="1"/>
<rect x="659.500" y="504.500" width="6" height="6" fill="#2a2a2a"/>
<rect x="657.500" y="502.500" width="5" height="5" fill="#c6c6c6" stroke="#333" stroke-width="1"/>
<!-- pathfinder -->
<rect x="658" y="523" width="8.500" height="8.500" fill="#333"/><rect x="663.500" y="528.500" width="9.500" height="9.500" fill="#2a2a2a"/>
<rect x="663.500" y="528.500" width="3.500" height="3.500" fill="#aaa" stroke="#444" stroke-width=".8"/>
<use href="#dsep" y="547"/>
<use href="#dgrip" x="655.500" y="551"/>
<!-- layers -->
<path d="M665.500 568l8.500 4.500l-8.500 5l-8.500-5z" fill="#333"/>
<path d="M665.500 562.500l8.500 5l-8.500 5l-8.500-5z" fill="#2a2a2a" stroke="#c6c6c6" stroke-width="1"/>
<!-- strip grip -->
<path d="M687 319.500h4M687 321.500h4M687 323.500h4" stroke="#666" stroke-width="1"/>
</svg>

</div></body></html>
